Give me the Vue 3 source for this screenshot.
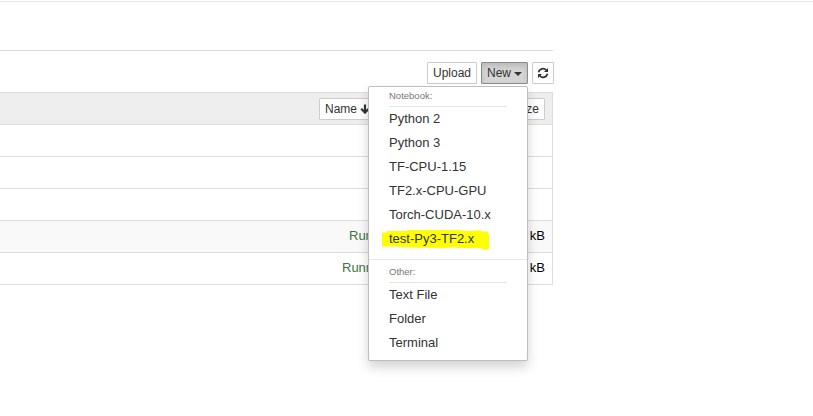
<script setup>
const rows = [
  { status: '', size: '' },
  { status: '', size: '' },
  { status: '', size: '' },
  { status: 'Run', size: 'kB', tone: 'shaded' },
  { status: 'Runn', size: 'kB', tone: 'wide' },
]
const notebooks = ['Python 2', 'Python 3', 'TF-CPU-1.15', 'TF2.x-CPU-GPU', 'Torch-CUDA-10.x', 'test-Py3-TF2.x']
const others = ['Text File', 'Folder', 'Terminal']
</script>

<template>
  <div class="page">
    <header class="topbar"></header>
    <main class="content">
      <div class="toolbar">
        <button class="btn upload">Upload</button>
        <div class="new-wrap">
          <button class="btn new">New<span class="caret"></span></button>
          <div class="menu">
            <div class="heading">Notebook:</div>
            <div v-for="n in notebooks" :key="n" class="item">
              <svg v-if="n.startsWith('test')" class="marker" viewBox="0 0 108 20" width="108" height="20">
                <path d="M0 2.500H5V1H25V0H76L86 1L99 0V1.500H106V4H107V19.500H100V18H76L71 17L65 18L26 17.500L14 16.500H0Z" fill="#ffff00" />
              </svg>
              <span class="label">{{ n }}</span>
            </div>
            <div class="divider"></div>
            <div class="heading">Other:</div>
            <div v-for="o in others" :key="o" class="item"><span class="label">{{ o }}</span></div>
          </div>
        </div>
        <button class="btn refresh">
          <svg width="12" height="12" viewBox="0 0 12 12">
            <path d="M1.500 5.200C2.300 1.600 6.800.600 9.300 3.200M10.500 6.800C9.700 10.400 5.200 11.400 2.700 8.800" fill="none" stroke="#333" stroke-width="1.700" />
            <path d="M11 1V5H7ZM1 11V7H5Z" fill="#333" />
          </svg>
        </button>
      </div>
      <section class="list">
        <div class="list-header">
          <button class="btn name">Name
            <svg class="arrow" width="10" height="10" viewBox="0 0 10 10"><path d="M5 .5V8.500M1.200 4.800L5 8.600L8.800 4.800" fill="none" stroke="#333" stroke-width="2.200" /></svg>
          </button>
          <button class="btn size">File size</button>
        </div>
        <div v-for="(r, i) in rows" :key="i" class="row" :class="r.tone">
          <span class="status">{{ r.status }}</span>
          <span class="amount">{{ r.size }}</span>
        </div>
      </section>
    </main>
  </div>
</template>

<style>
body { margin: 0; background: #fff; }
</style>
<style scoped>
.page, .page * { box-sizing: border-box; }
.page { height: 416px; overflow: hidden; background: #fff; font: 13px/20px "Liberation Sans", Arial, sans-serif; color: #000; }
.topbar { height: 2px; border-bottom: 1px solid #e7e7e7; }
.content { width: 553px; padding-top: 48px; }
.toolbar { height: 42px; border-top: 1px solid #ddd; padding-top: 11px; display: flex; justify-content: flex-end; gap: 4px; }
.btn { height: 22px; margin: 0; padding: 0 5px; border: 1px solid #ccc; border-radius: 1px; background: #fff; font: 12px/18px "Liberation Sans", Arial, sans-serif; color: #333; display: flex; align-items: center; white-space: nowrap; }
.upload { width: 50px; justify-content: center; }
.new-wrap { position: relative; }
.new { width: 47px; background: #d4d4d4; border-color: #8c8c8c; box-shadow: inset 0 3px 5px rgba(0, 0, 0, .125); }
.caret { margin-left: 3px; margin-top: 1px; border-top: 4px solid #333; border-left: 4px solid transparent; border-right: 4px solid transparent; }
.refresh { width: 22px; padding: 0; justify-content: center; margin-right: -1px; }
.menu { position: absolute; z-index: 2; right: 0; top: 24px; width: 160px; height: 275px; padding-top: 3px; background: #fff; border: 1px solid #bebebe; border-radius: 2px; box-shadow: 0 6px 12px rgba(0, 0, 0, .175); }
.heading { height: 17px; margin: 0 20px; border-bottom: 1px solid #e5e5e5; font-size: 9.500px; line-height: 11px; color: #777; }
.item { position: relative; height: 24px; padding-left: 20px; line-height: 24px; color: #333; white-space: nowrap; }
.label { position: relative; }
.marker { position: absolute; left: 13px; top: 3px; }
.divider { height: 1px; margin: 8px 0 6px; background: #e5e5e5; }
.list { border: 1px solid #ddd; border-left: 0; }
.list-header { height: 31px; background: #eee; padding: 0 7px 0 319px; display: flex; align-items: center; justify-content: space-between; }
.arrow { margin-left: 3px; }
.row { height: 32px; border-top: 1px solid #ddd; padding: 0 7px 2px 349px; display: flex; align-items: center; justify-content: space-between; }
.shaded { background: #f9f9f9; }
.wide { padding-left: 342px; }
.status { color: #3c763d; }
</style>
